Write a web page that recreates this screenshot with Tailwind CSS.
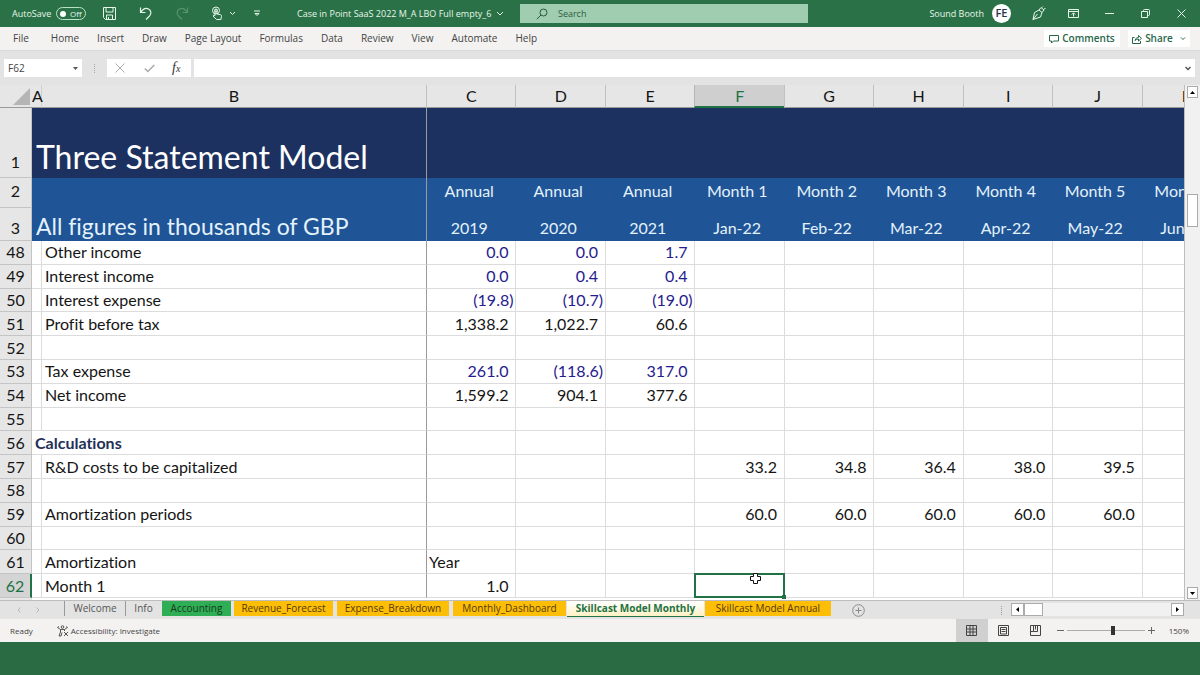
<!DOCTYPE html>
<html lang="en">
  <head>
    <meta charset="UTF-8" />
    <meta name="viewport" content="width=device-width, initial-scale=1.0" />
    <title>Case in Point SaaS 2022 M_A LBO Full empty_6</title>
    <script src="https://cdn.jsdelivr.net/npm/@tailwindcss/browser@4"></script>
  </head>
  <body class="h-screen overflow-hidden flex flex-col bg-[#2a6b44] font-['Open_Sans','Noto_Sans',sans-serif] text-[10px] text-[#444]">
    <!-- Title bar -->
    <header class="h-[27px] shrink-0 flex items-center bg-[#2b7147] text-[#e6f7ea] text-[9px]">
      <div class="w-[43.33%] flex items-center pl-3">
        <label for="autosave" class="w-11 shrink-0">AutoSave</label>
        <button id="autosave" role="switch" aria-checked="false" class="w-[30px] h-[13px] shrink-0 rounded-full border border-[#b9e3c6] flex items-center gap-1 pl-[3px] text-[8px]">
          <span class="size-[6px] rounded-full bg-white"></span>Off
        </button>
        <button aria-label="Save" class="ml-4">
          <svg class="size-[15px]" viewBox="0 0 15 15" fill="none" stroke="currentColor"><path d="M1.5 1.5h12v12h-10l-2-2zM4 1.5v4.5h7V1.5M4.5 13.5V9h6v4.5M6.5 11v2.500"/></svg>
        </button>
        <button aria-label="Undo" class="ml-[21px]">
          <svg class="size-[15px]" viewBox="0 0 15 15" fill="none" stroke="currentColor" stroke-width="1.200"><path d="M2.500 1.500v5h5M2.500 6.500C5 3 8 1.700 10.500 3c3 1.500 3 5 1 7L8 13.500"/></svg>
        </button>
        <button aria-label="Redo" class="ml-[22px] text-[#57946c]">
          <svg class="size-[15px]" viewBox="0 0 15 15" fill="none" stroke="currentColor" stroke-width="1.200"><path d="M12.500 1.500v5h-5M12.500 6.500C10 3 7 1.700 4.500 3c-3 1.500-3 5-1 7L7 13.500"/></svg>
        </button>
        <button aria-label="Touch mode" class="ml-5 flex items-center gap-1">
          <svg class="size-[15px]" viewBox="0 0 15 15" fill="none" stroke="currentColor"><circle cx="6" cy="4.500" r="3.500"/><circle cx="6" cy="4.500" r="1.500"/><path d="M5 9.500V4.500a1 1 0 0 1 2 0V8l3.500.700q1.300.300 1 1.800l-.600 3H6.500L3 10q.700-1.500 2-.500"/></svg>
          <svg class="w-[7px] h-[5px]" viewBox="0 0 7 5" fill="none" stroke="currentColor"><path d="M1 1l2.500 2.500L6 1"/></svg>
        </button>
        <button aria-label="Customize toolbar" class="ml-[17px]">
          <svg class="w-[8px] h-[7px]" viewBox="0 0 8 7" fill="none" stroke="currentColor"><path d="M1 1h6M2 3.500l2 2 2-2z"/></svg>
        </button>
        <button class="ml-9 flex items-center gap-[5px] whitespace-nowrap">
          Case in Point SaaS 2022 M_A LBO Full empty_6
          <svg class="w-[8px] h-[5px]" viewBox="0 0 8 5" fill="none" stroke="currentColor"><path d="M1 1l3 3 3-3"/></svg>
        </button>
      </div>
      <div class="w-[24%] h-[19px] flex items-center gap-[10px] pl-4 bg-[#a0cdb0] text-[#255c3b]">
        <svg class="size-[12px] shrink-0" viewBox="0 0 12 12" fill="none" stroke="currentColor"><circle cx="7.500" cy="4.500" r="3.500"/><path d="M5 7L.800 11.200"/></svg>
        <input type="text" aria-label="Search" placeholder="Search" class="w-full bg-transparent outline-none placeholder:text-[#2f5c40]" />
      </div>
      <div class="flex-1 flex items-center justify-end pr-[14px]">
        <span>Sound Booth</span>
        <span class="ml-2 size-[19px] rounded-full bg-white text-[#23364a] text-[11px] flex items-center justify-center font-semibold">FE</span>
        <button aria-label="Pen" class="ml-[20px]">
          <svg class="size-[15px]" viewBox="0 0 15 15" fill="none" stroke="currentColor"><path d="M2 13.500L3.500 6.500L8 4l3 2.500L9.500 11zM2 13.500L6.500 8M8 4l2-2.500 3 2.500-2 2.500M11 1.500l1-1M13 3l1.500-.500"/></svg>
        </button>
        <button aria-label="Ribbon display options" class="ml-[21px]">
          <svg class="w-[13px] h-[11px]" viewBox="0 0 13 11" fill="none" stroke="currentColor"><path d="M1.500 1.500h10v8h-10zM1.500 3.500h10M6.500 8.500V5M4.800 6.500l1.700-1.700 1.700 1.700"/></svg>
        </button>
        <button aria-label="Minimize" class="ml-[25px]">
          <svg class="w-[9px] h-[9px]" viewBox="0 0 9 9" stroke="currentColor"><path d="M0 4.500h9"/></svg>
        </button>
        <button aria-label="Restore" class="ml-[27px]">
          <svg class="w-[9px] h-[9px]" viewBox="0 0 9 9" fill="none" stroke="currentColor"><path d="M.500 2.500h6v6h-6zM2.500 2.500V1.500q0-1 1-1h4q1 0 1 1v4q0 1-1 1h-1"/></svg>
        </button>
        <button aria-label="Close" class="ml-[27px]">
          <svg class="w-[9px] h-[9px]" viewBox="0 0 9 9" stroke="currentColor"><path d="M.500.500l8 8M8.500.500l-8 8"/></svg>
        </button>
      </div>
    </header>

    <!-- Ribbon tabs -->
    <nav class="h-[24px] shrink-0 flex items-center justify-between bg-[#f3f2f1] border-b border-[#d9d9d9] pl-[13px] pr-[10px]">
      <div class="flex items-center gap-[18px] whitespace-nowrap">
        <button class="mr-1">File</button>
        <button>Home</button>
        <button>Insert</button>
        <button>Draw</button>
        <button>Page Layout</button>
        <button>Formulas</button>
        <button>Data</button>
        <button>Review</button>
        <button>View</button>
        <button>Automate</button>
        <button>Help</button>
      </div>
      <div class="flex items-center gap-2 font-semibold text-[#276749]">
        <button class="w-[76px] h-[17px] flex items-center justify-center gap-[3px] bg-white">
          <svg class="size-[10px]" viewBox="0 0 10 10" fill="none" stroke="currentColor"><path d="M.500 1.500h9v5.500h-5L2.500 9V7h-2z"/></svg>
          Comments
        </button>
        <button class="w-[62px] h-[17px] flex items-center justify-center gap-[3px] bg-white">
          <svg class="size-[10px]" viewBox="0 0 10 10" fill="none" stroke="currentColor"><path d="M2.500 3.500h-2v6h8V7M3 6.500Q3.500 3.500 6.500 3.500V1.500l3 2.800-3 2.700V5Q4.500 5 3 6.500z"/></svg>
          Share
          <svg class="ml-1 w-[6px] h-[4px]" viewBox="0 0 6 4" fill="none" stroke="currentColor"><path d="M1 .500l2 2 2-2"/></svg>
        </button>
      </div>
    </nav>

    <!-- Formula bar -->
    <div class="h-[34px] shrink-0 flex items-center bg-[#e3e3e3] pl-1 pr-[5px]">
      <div class="w-[78px] h-[18px] flex items-center bg-white px-1">
        <input type="text" aria-label="Name box" value="F62" class="w-full outline-none" />
        <svg class="w-[5px] h-[3px] shrink-0" viewBox="0 0 5 3" fill="#555"><path d="M0 0h5L2.500 3z"/></svg>
      </div>
      <svg class="mx-[11px] w-[3px] h-[9px]" viewBox="0 0 3 9" fill="#a8a8a8"><path d="M1 0h1v1H1zM1 2h1v1H1zM1 4h1v1H1zM1 6h1v1H1zM1 8h1v1H1z"/></svg>
      <div class="w-[84px] h-[18px] flex items-center bg-white pl-2">
        <button aria-label="Cancel"><svg class="size-[10px]" viewBox="0 0 10 10" stroke="#aaa"><path d="M.500.500l9 9M9.500.500l-9 9"/></svg></button>
        <button aria-label="Enter" class="ml-[19px]"><svg class="w-[11px] h-[9px]" viewBox="0 0 11 9" fill="none" stroke="#aaa" stroke-width="1.500"><path d="M.800 4.500l3 3L10.300 1"/></svg></button>
        <button aria-label="Insert function" class="ml-[17px] font-['Liberation_Serif',serif] italic text-[14px] leading-none text-[#333]">f<span class="text-[10px]">x</span></button>
      </div>
      <div class="ml-[3px] h-[18px] flex-1 flex items-center bg-white pr-1">
        <input type="text" aria-label="Formula bar" class="w-full outline-none" />
        <svg class="w-[6px] h-[5px] shrink-0" viewBox="0 0 6 5" fill="none" stroke="#555" stroke-width="1.500"><path d="M.500 1L3 3.500 5.500 1"/></svg>
      </div>
    </div>

    <!-- Sheet -->
    <div class="flex-1 min-h-0 flex bg-[#e3e3e3]">
      <div class="flex-1 min-w-0 overflow-hidden bg-white">
        <table class="w-[104%] h-full table-fixed border-separate border-spacing-0 font-['Lato',sans-serif] text-[16px] leading-5 text-[#151515] whitespace-nowrap [font-variant-ligatures:none]">
          <colgroup>
            <col class="w-[32px]" />
            <col class="w-[10px]" />
            <col class="w-[384px]" />
            <col /><col /><col /><col /><col /><col /><col /><col /><col />
          </colgroup>
          <thead id="head"></thead>
          <tbody id="rows"></tbody>
        </table>
      </div>
      <!-- Vertical scroll bar -->
      <div class="w-4 flex flex-col bg-[#f1f1f1] border-l border-[#bdbdbd] px-[2px] py-px">
        <button aria-label="Scroll up" class="h-[12px] bg-white border border-[#ababab] flex items-center justify-center"><svg class="w-[5px] h-[3px]" viewBox="0 0 5 3"><path d="M0 3h5L2.500 0z"/></svg></button>
        <div class="mt-[96px] h-[33px] bg-white border border-[#ababab]"></div>
        <button aria-label="Scroll down" class="mt-auto h-[12px] bg-white border border-[#ababab] flex items-center justify-center"><svg class="w-[5px] h-[3px]" viewBox="0 0 5 3"><path d="M0 0h5L2.500 3z"/></svg></button>
      </div>
    </div>

    <!-- Sheet tabs -->
    <div class="h-[19px] shrink-0 flex items-start bg-[#e3e3e3] border-t border-[#bdbdbd] text-[#555] whitespace-nowrap">
      <div class="w-[64px] h-full flex items-center gap-[15px] pl-[17px] text-[#b5b5b5]">
        <button aria-label="Previous sheet"><svg class="w-[4px] h-[6px]" viewBox="0 0 4 6" fill="none" stroke="currentColor"><path d="M3.500.500L1 3l2.500 2.500"/></svg></button>
        <button aria-label="Next sheet"><svg class="w-[4px] h-[6px]" viewBox="0 0 4 6" fill="none" stroke="currentColor"><path d="M.500.500L3 3 .500 5.500"/></svg></button>
      </div>
      <button class="w-[61px] h-[15px] leading-[13px] border-l border-[#999]">Welcome</button>
      <button class="w-[36px] h-[15px] leading-[13px] border-l border-[#999]">Info</button>
      <button class="ml-px w-[69px] h-[15px] leading-[13px] bg-[#2fae55] text-[#163c20]">Accounting</button>
      <button class="ml-[3px] w-[99px] h-[15px] leading-[13px] bg-[#fdbe08] text-[#553a05]">Revenue_Forecast</button>
      <button class="ml-[4px] w-[112px] h-[15px] leading-[13px] bg-[#fdbe08] text-[#553a05]">Expense_Breakdown</button>
      <button class="ml-[4px] w-[113px] h-[15px] leading-[13px] bg-[#fdbe08] text-[#553a05]">Monthly_Dashboard</button>
      <button class="ml-px w-[137px] h-[16px] leading-[13px] bg-linear-to-b from-white to-[#fff1c4] border-b border-[#217346] text-[#217346] font-bold">Skillcast Model Monthly</button>
      <button class="ml-px w-[126px] h-[15px] leading-[13px] bg-[#fdbe08] text-[#553a05]">Skillcast Model Annual</button>
      <button aria-label="New sheet" class="ml-[21px] mt-[3px]">
        <svg class="size-[13px]" viewBox="0 0 13 13" fill="none" stroke="#8a8a8a"><circle cx="6.500" cy="6.500" r="5.800"/><path d="M6.500 3.500v6M3.500 6.500h6"/></svg>
      </button>
      <svg class="ml-auto mt-[5px] w-[3px] h-[9px]" viewBox="0 0 3 9" fill="#999"><path d="M1 0h1v1H1zM1 2h1v1H1zM1 4h1v1H1zM1 6h1v1H1zM1 8h1v1H1z"/></svg>
      <!-- Horizontal scroll bar -->
      <div class="ml-2 mr-4 mt-[2px] w-[173px] h-[13px] flex bg-[#f1f1f1]">
        <button aria-label="Scroll left" class="w-[13px] bg-white border border-[#ababab] flex items-center justify-center"><svg class="w-[3px] h-[5px]" viewBox="0 0 3 5"><path d="M3 0v5L0 2.500z"/></svg></button>
        <div class="w-[19px] bg-white border border-[#ababab]"></div>
        <button aria-label="Scroll right" class="ml-auto w-[13px] bg-white border border-[#ababab] flex items-center justify-center"><svg class="w-[3px] h-[5px]" viewBox="0 0 3 5"><path d="M0 0v5l3-2.500z"/></svg></button>
      </div>
    </div>

    <!-- Status bar -->
    <footer class="mb-[33px] h-[23px] shrink-0 flex items-center bg-[#f3f2f1] text-[8px] pl-[10px] pr-[11px]">
      <span>Ready</span>
      <button class="ml-6 flex items-center gap-[2px]">
        <svg class="size-[12px]" viewBox="0 0 12 12" fill="none" stroke="#555"><circle cx="5.500" cy="2" r="1.300"/><path d="M.500 2.500l3 2v2.500L2 11M10.500 2.500l-3 2V6M.500 2.500L2 1.500M10.500 2.500L9 1.500M3.500 4.500h4M5 7.500L4 11H2M7 7l4 4M11 7l-4 4"/></svg>
        Accessibility: Investigate
      </button>
      <div class="ml-auto h-full flex items-center">
        <button aria-label="Normal view" class="w-8 h-full flex items-center justify-center bg-[#d0d0d0]"><svg class="size-[11px]" viewBox="0 0 11 11" fill="none" stroke="#444"><path d="M.500.500h10v10H.500zM.500 4h10M.500 7h10M4 .500v10M7 .500v10"/></svg></button>
        <button aria-label="Page layout view" class="w-8 h-full flex items-center justify-center"><svg class="size-[11px]" viewBox="0 0 11 11" fill="none" stroke="#444"><path d="M.500.500h10v10H.500zM2.500 2.500h6v6.500h-6zM3.500 4.500h4M3.500 6.500h4"/></svg></button>
        <button aria-label="Page break preview" class="w-8 h-full flex items-center justify-center"><svg class="size-[11px]" viewBox="0 0 11 11" fill="none" stroke="#444"><path d="M.500.500h10v10H.500zM3.500.500v6h4v-6M.500 6.500h3M5.500.500v4"/></svg></button>
        <button aria-label="Zoom out" class="ml-[5px]"><svg class="size-[7px]" viewBox="0 0 7 7" stroke="#666"><path d="M0 3.500h7"/></svg></button>
        <input type="range" aria-label="Zoom" min="0" max="100" value="60" class="mx-[3px] w-[78px] h-[9px] appearance-none bg-linear-to-b from-transparent from-45% via-[#666] via-45% to-transparent to-55% [&::-webkit-slider-thumb]:appearance-none [&::-webkit-slider-thumb]:w-[4px] [&::-webkit-slider-thumb]:h-[9px] [&::-webkit-slider-thumb]:bg-[#333]" />
        <button aria-label="Zoom in"><svg class="size-[7px]" viewBox="0 0 7 7" stroke="#666"><path d="M0 3.500h7M3.500 0v7"/></svg></button>
        <span class="ml-[14px]">150%</span>
      </div>
    </footer>

    <script>
      const letters = ['C', 'D', 'E', 'F', 'G', 'H', 'I', 'J', 'K'];
      const periods = ['Annual', 'Annual', 'Annual', 'Month 1', 'Month 2', 'Month 3', 'Month 4', 'Month 5', 'Month 6'];
      const dates = ['2019', '2020', '2021', 'Jan-22', 'Feb-22', 'Mar-22', 'Apr-22', 'May-22', 'Jun-22'];

      // [row number, label, values from column C on, true for typed-in (blue) figures]
      const lines = [
        [48, 'Other income', ['0.0', '0.0', '1.7'], true],
        [49, 'Interest income', ['0.0', '0.4', '0.4'], true],
        [50, 'Interest expense', ['(19.8)', '(10.7)', '(19.0)'], true],
        [51, 'Profit before tax', ['1,338.2', '1,022.7', '60.6']],
        [52, '', []],
        [53, 'Tax expense', ['261.0', '(118.6)', '317.0'], true],
        [54, 'Net income', ['1,599.2', '904.1', '377.6']],
        [55, '', []],
        [56, 'Calculations', []],
        [57, 'R&amp;D costs to be capitalized', ['', '', '', '33.2', '34.8', '36.4', '38.0', '39.5']],
        [58, '', []],
        [59, 'Amortization periods', ['', '', '', '60.0', '60.0', '60.0', '60.0', '60.0']],
        [60, '', []],
        [61, 'Amortization', ['Year']],
        [62, 'Month 1', ['1.0']],
      ];

      const rowHead = 'bg-[#e6e6e6] border-b border-r border-[#c4c4c4] font-normal text-center p-0';
      const freeze = ' border-l border-l-[#9a9a9a]';

      // Column letters and the frozen rows 1 to 3
      let head = '<tr class="h-[23px]"><th class="bg-[#e6e6e6] p-0 border-b border-[#9a9a9a]"><svg class="ml-auto mr-[2px] size-[17px]" viewBox="0 0 17 17" fill="#b5b5b5"><path d="M17 0v17H0z"/></svg></th>'
        + '<th class="bg-[#e6e6e6] p-0 border-b border-r border-b-[#9a9a9a] border-r-[#d0d0d0] font-normal">A</th><th class="bg-[#e6e6e6] p-0 border-b border-[#9a9a9a] font-normal">B</th>';
      letters.forEach(l => {
        head += l === 'F'
          ? '<th class="bg-[#cfcfcf] p-0 border-b-2 border-b-[#217346] border-l border-l-[#b5b5b5] font-normal text-[#217346]">F</th>'
          : `<th class="bg-[#e6e6e6] p-0 border-b border-b-[#9a9a9a] border-l border-l-[#c0c0c0] font-normal">${l}</th>`;
      });
      head += '</tr>';
      head += `<tr class="h-[70px]"><th class="${rowHead} align-bottom pb-[5px]">1</th><td colspan="2" class="bg-[#1d3160] text-white text-[32px] leading-10 p-0 pl-1 pb-px align-bottom">Three Statement Model</td>`
        + letters.map((l, i) => `<td class="bg-[#1d3160]${i ? '' : freeze}"></td>`).join('') + '</tr>';
      head += `<tr class="h-[30px]"><th class="${rowHead} align-top pt-[3px]">2</th><td colspan="2" class="bg-[#1f5497]"></td>`
        + periods.map((t, i) => `<td class="bg-[#1f5497] text-[#e3f2fb] text-center align-top p-0 pt-[3px] pr-1${i ? '' : freeze}">${t}</td>`).join('') + '</tr>';
      head += `<tr class="h-[33px]"><th class="${rowHead} align-bottom pb-[2px]">3</th><td colspan="2" class="bg-[#1f5497] text-[#e3f2fb] text-[23px] leading-7 p-0 pl-1 pb-px align-bottom">All figures in thousands of GBP</td>`
        + dates.map((t, i) => `<td class="bg-[#1f5497] text-[#e3f2fb] text-center p-0 pr-1 pb-[3px] align-bottom${i ? '' : freeze}">${t}</td>`).join('') + '</tr>';
      document.getElementById('head').innerHTML = head;

      // Scrolled rows
      document.getElementById('rows').innerHTML = lines.map(([n, label, values, typed]) => {
        let html = '<tr>';
        html += n === 62
          ? '<th class="bg-[#d4d4d4] border-b border-r-2 border-b-[#c4c4c4] border-r-[#217346] font-normal text-center p-0 text-[#217346]">62</th>'
          : `<th class="${rowHead}">${n}</th>`;
        html += n === 56
          ? `<td colspan="2" class="border-b border-[#dcdcdc] p-0 pl-[3px] font-bold text-[#1f3158]">${label}</td>`
          : `<td class="border-b border-r border-[#dcdcdc] p-0"></td><td class="border-b border-[#dcdcdc] p-0 pl-[3px]">${label}</td>`;
        letters.forEach((l, i) => {
          const v = values[i] || '';
          const side = v === 'Year' ? 'text-left pl-[2px]' : v.startsWith('(') ? 'text-right pr-[2px]' : 'text-right pr-[7px]';
          const edge = i === 0 ? 'border-l-[#9a9a9a]' : 'border-l-[#dcdcdc]';
          const picked = n === 62 && l === 'F';
          html += `<td class="border-b border-l border-b-[#dcdcdc] py-0 ${edge} ${side} ${typed ? 'text-[#25208f]' : ''} ${picked ? 'relative' : ''}">${v}`;
          if (picked) {
            html += '<div class="absolute -inset-px border-2 border-[#217346]"></div><div class="absolute -right-[2px] -bottom-[2px] size-[4px] bg-[#217346]"></div>'
              + '<svg class="absolute left-[55px] -top-px size-[11px]" viewBox="0 0 11 11" fill="#fff" stroke="#111"><path d="M3.500.500h4v3h3v4h-3v3h-4v-3h-3v-4h3z"/></svg>';
          }
          html += '</td>';
        });
        return html + '</tr>';
      }).join('')
        // top edge of the next row
        + '<tr class="h-[2px]"><th class="bg-[#e6e6e6] p-0"></th><td class="p-0" colspan="11"></td></tr>';
    </script>
  </body>
</html>
